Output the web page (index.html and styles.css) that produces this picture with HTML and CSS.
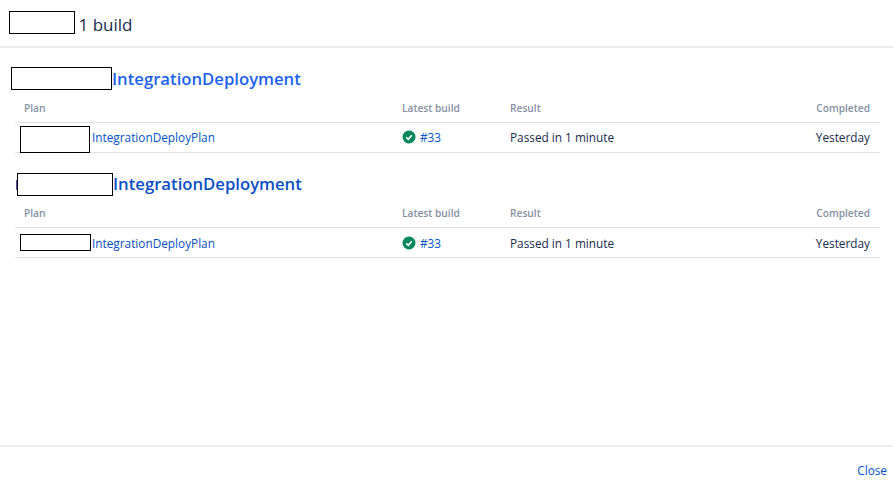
FILE: index.html
```html
<!DOCTYPE html>
<html lang="en">
<head>
    <meta charset="UTF-8">
    <meta name="viewport" content="width=device-width, initial-scale=1.0">
    <title>Builds</title>
    <link rel="stylesheet" href="styles.css">
</head>
<body>
    <div class="dialog">
        <header class="dialog__head">
            <span class="mask mask--title"></span>
            <h1>1 build</h1>
        </header>

        <main class="dialog__body">
            <section class="project">
                <h2><span class="mask mask--project"></span><a href="#">IntegrationDeployment</a></h2>
                <table class="builds">
                    <thead>
                        <tr><th>Plan</th><th>Latest build</th><th>Result</th><th class="right">Completed</th></tr>
                    </thead>
                    <tbody>
                        <tr>
                            <td>
                                <div class="plan"><span class="mask mask--plan"></span><a href="#">IntegrationDeployPlan</a></div>
                            </td>
                            <td>
                                <span class="build">
                                    <svg class="tick" viewBox="0 0 14 14"><circle cx="7" cy="7" r="6.5" fill="#00875a"/><path d="M4.2 7.3l2 1.9 3.6-4" fill="none" stroke="#fff" stroke-width="1.7"/></svg>
                                    <a href="#">#33</a>
                                </span>
                            </td>
                            <td>Passed in 1 minute</td>
                            <td class="right">Yesterday</td>
                        </tr>
                    </tbody>
                </table>
            </section>

            <section class="project project--second">
                <h2><span class="mask mask--project2"></span><a href="#">IntegrationDeployment</a></h2>
                <table class="builds">
                    <thead>
                        <tr><th>Plan</th><th>Latest build</th><th>Result</th><th class="right">Completed</th></tr>
                    </thead>
                    <tbody>
                        <tr>
                            <td>
                                <div class="plan"><span class="mask mask--plan2"></span><a href="#">IntegrationDeployPlan</a></div>
                            </td>
                            <td>
                                <span class="build">
                                    <svg class="tick" viewBox="0 0 14 14"><circle cx="7" cy="7" r="6.5" fill="#00875a"/><path d="M4.2 7.3l2 1.9 3.6-4" fill="none" stroke="#fff" stroke-width="1.7"/></svg>
                                    <a href="#">#33</a>
                                </span>
                            </td>
                            <td>Passed in 1 minute</td>
                            <td class="right">Yesterday</td>
                        </tr>
                    </tbody>
                </table>
            </section>
        </main>

        <footer class="dialog__foot">
            <a href="#">Close</a>
        </footer>
    </div>
</body>
</html>
```

FILE: styles.css
```css
* {
    margin: 0px;
    box-sizing: border-box;
}

body {
    font-family: "Open Sans", "Noto Sans", sans-serif;
    font-size: 11.8px;
    color: #172b4d;
    background-color: #fff;
}

a {
    color: #0052cc;
    text-decoration: none;
}

.dialog {
    width: 893px;
    height: 488px;
    display: flex;
    flex-direction: column;
}

.dialog__head {
    height: 48px;
    padding: 11px 0 0 9px;
    border-bottom: 2px solid #ebecf0;
    display: flex;
    align-items: flex-start;
}

.dialog__head h1 {
    font-size: 17px;
    font-weight: 400;
    line-height: 28px;
    margin-left: 3.5px;
}

.dialog__body {
    flex: 1;
    padding: 19px 13px 0 15px;
}

.project h2 {
    font-size: 16.7px;
    font-weight: 600;
    line-height: 23px;
    height: 23px;
    display: flex;
}

.project h2 a {
    color: #1b62f0;
}

.project--second {
    margin-top: 20px;
}

.project--second h2 a,
.project--second .plan a {
    color: #0a4fc4;
}

.project--second h2 a {
    margin-top: -1px;
}

.project--second h2::before {
    content: "";
    width: 1px;
    height: 10px;
    margin: 7px 0 0 1px;
    background-color: #5a4fa0;
}

.mask {
    display: block;
    flex: none;
    background-color: #fff;
    border: 1px solid #000;
}

.mask--title {
    width: 66px;
    height: 23px;
}

.mask--project {
    width: 101px;
    height: 23px;
    margin-left: -4px;
}

.mask--project2 {
    width: 96px;
    height: 23px;
}

.mask--plan {
    width: 70px;
    height: 27px;
    margin: 2px 2px -2px 0;
}

.mask--plan2 {
    width: 71px;
    height: 17px;
    margin-right: 1px;
}

.builds {
    width: 865px;
    border-collapse: collapse;
    table-layout: fixed;
}

.builds th {
    font-size: 10.2px;
    font-weight: 600;
    color: #8590a3;
    text-align: left;
    height: 32px;
    padding: 4px 0 0 0;
    border-bottom: 1px solid #dfe1e6;
}

.builds th:nth-child(1) { width: 387px; padding-left: 9px; }
.builds th:nth-child(2) { width: 108px; }
.builds th:nth-child(4) { width: 120px; padding-right: 10px; }

.builds td {
    height: 30px;
    padding: 0 10px 0 0;
    border-bottom: 1px solid #dfe1e6;
    vertical-align: middle;
}

.builds td:first-child {
    padding-left: 5px;
}

.builds .right {
    text-align: right;
}

.plan {
    display: flex;
    align-items: center;
}

.build {
    display: flex;
    align-items: center;
    gap: 4px;
}

.tick {
    width: 14px;
    height: 14px;
    flex: none;
}

.dialog__foot {
    height: 43px;
    border-top: 2px solid #ebecf0;
    padding: 15px 6px 0 0;
    text-align: right;
}
```
